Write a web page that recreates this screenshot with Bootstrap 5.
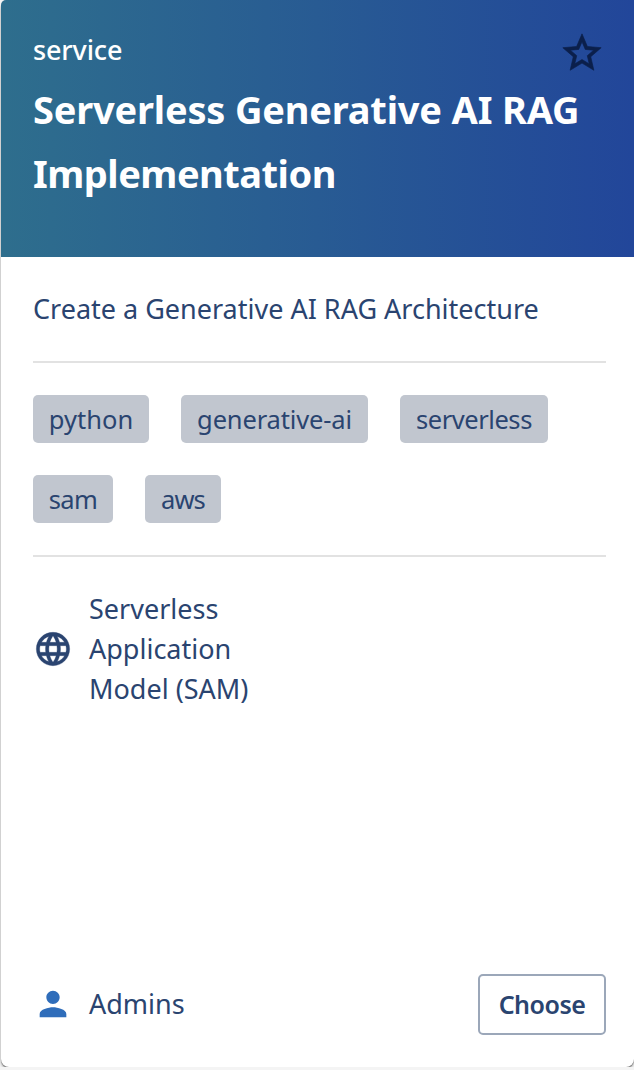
<!DOCTYPE html>
<html lang="en">
<head>
<meta charset="utf-8">
<meta name="viewport" content="width=device-width, initial-scale=1">
<title>Service template</title>
<link rel="stylesheet" href="https://cdn.jsdelivr.net/npm/bootstrap@5.3.0/dist/css/bootstrap.min.css">
<style>
  body { font-family: "Noto Sans", sans-serif; font-size: 27px; line-height: 40px; color: #2a4470; background: #f4f4f4; overflow: hidden; }
  .template-card { height: 1067px; width: 633px; margin-left: 1px; border: 0; border-radius: 8px 0 8px 8px; color: inherit;
    box-shadow: 0 1px 1px rgba(0,0,0,.4), 0 2px 3px rgba(0,0,0,.3); }
  .template-head { height: 257px; padding: 30px 32px 0; border: 0; border-radius: 5px 0 0 0 !important; background: linear-gradient(90deg, #2e6e8d, #285b93 50%, #22469a); }
  .kind { font-weight: 500; letter-spacing: -.15px; }
  .star { width: 46px; height: 46px; margin: 0 -3px 0 0; color: #0b1f4b; stroke: currentColor; stroke-width: .35; }
  .template-head h1 { font-size: 38px; line-height: 64px; margin-top: 1px; white-space: nowrap; }
  .title-line { letter-spacing: -.19px; }
  .title-end { letter-spacing: -.5px; }
  .template-body { padding: 32px 28px 32px 32px; }
  .rule { height: 2px; background: #e2e2e2; }
  .chips { gap: 32px; padding: 32px 0; }
  .chip { height: 48px; line-height: 48px; text-align: center; border-radius: 5px; background: #c1c6cf; font-size: 25.5px; white-space: nowrap; }
  .chip-python { width: 116px; }
  .chip-genai { width: 187px; letter-spacing: -.15px; }
  .chip-serverless { width: 148px; letter-spacing: -.46px; }
  .chip-sam { width: 80px; letter-spacing: -.7px; }
  .chip-aws { width: 76px; letter-spacing: -.9px; }
  .meta { gap: 16px; }
  .ico { width: 40px; height: 40px; flex: none; }
  .globe { stroke: currentColor; stroke-width: .2; }
  .owner { margin-bottom: 2px; }
  .choose { width: 128px; height: 61px; padding: 0; border: 2px solid #9ba7b9; border-radius: 5px; color: #2a4470; font-size: 25px; font-weight: 600; letter-spacing: -.5px; }
</style>
</head>
<body>
<div class="card template-card">
  <div class="card-header template-head text-white">
    <div class="d-flex justify-content-between align-items-start">
      <span class="kind">service</span>
      <svg class="star" viewBox="0 0 24 24" fill="currentColor"><path d="M22 9.24l-7.19-.62L12 2 9.19 8.63 2 9.24l5.46 4.73L5.82 21 12 17.27 18.18 21l-1.63-7.03L22 9.24zM12 15.4l-3.76 2.27 1-4.28-3.32-2.88 4.38-.38L12 6.1l1.71 4.04 4.38.38-3.32 2.88 1 4.28L12 15.4z"/></svg>
    </div>
    <h1 class="fw-bold mb-0"><span class="title-line">Serverless Generative AI RAG</span><br><span class="title-end">Implementation</span></h1>
  </div>
  <div class="card-body template-body d-flex flex-column">
    <div class="text-nowrap">Create a Generative AI RAG Architecture</div>
    <div class="rule flex-shrink-0" style="margin-top:32px"></div>
    <div class="chips d-flex flex-wrap">
      <span class="chip chip-python">python</span>
      <span class="chip chip-genai">generative-ai</span>
      <span class="chip chip-serverless">serverless</span>
      <span class="chip chip-sam">sam</span>
      <span class="chip chip-aws">aws</span>
    </div>
    <div class="rule flex-shrink-0"></div>
    <div class="meta d-flex align-items-center" style="padding-top:32px">
      <svg class="ico globe" viewBox="0 0 24 24" fill="currentColor"><path d="M11.99 2C6.47 2 2 6.48 2 12s4.47 10 9.99 10C17.52 22 22 17.52 22 12S17.52 2 11.99 2zm6.93 6h-2.95c-.32-1.25-.78-2.45-1.38-3.56 1.84.63 3.37 1.91 4.33 3.56zM12 4.04c.83 1.2 1.48 2.53 1.91 3.96h-3.82c.43-1.43 1.08-2.76 1.91-3.96zM4.26 14C4.1 13.36 4 12.69 4 12s.1-1.36.26-2h3.38c-.08.66-.14 1.32-.14 2s.06 1.34.14 2H4.26zm.82 2h2.95c.32 1.25.78 2.45 1.38 3.56-1.84-.63-3.37-1.9-4.33-3.56zm2.95-8H5.08c.96-1.66 2.49-2.93 4.33-3.56C8.81 5.55 8.35 6.75 8.03 8zM12 19.96c-.83-1.2-1.48-2.53-1.91-3.96h3.82c-.43 1.43-1.08 2.76-1.91 3.96zM14.34 14H9.66c-.09-.66-.16-1.32-.16-2s.07-1.35.16-2h4.68c.09.65.16 1.32.16 2s-.07 1.34-.16 2zm.25 5.56c.6-1.11 1.06-2.31 1.38-3.56h2.95c-.96 1.65-2.49 2.93-4.33 3.56zM16.36 14c.08-.66.14-1.32.14-2s-.06-1.34-.14-2h3.38c.16.64.26 1.31.26 2s-.1 1.36-.26 2h-3.38z"/></svg>
      <div>Serverless<br>Application<br>Model (SAM)</div>
    </div>
    <div class="d-flex align-items-center justify-content-between mt-auto">
      <div class="meta owner d-flex align-items-center">
        <svg class="ico" viewBox="0 0 24 24" fill="#2f6dba"><path d="M12 12c2.21 0 4-1.79 4-4s-1.79-4-4-4-4 1.79-4 4 1.79 4 4 4zm0 2c-2.67 0-8 1.34-8 4v2h16v-2c0-2.66-5.33-4-8-4z"/></svg>
        <span>Admins</span>
      </div>
      <button type="button" class="btn choose">Choose</button>
    </div>
  </div>
</div>
<script src="https://cdn.jsdelivr.net/npm/bootstrap@5.3.0/dist/js/bootstrap.bundle.min.js"></script>
</body>
</html>
